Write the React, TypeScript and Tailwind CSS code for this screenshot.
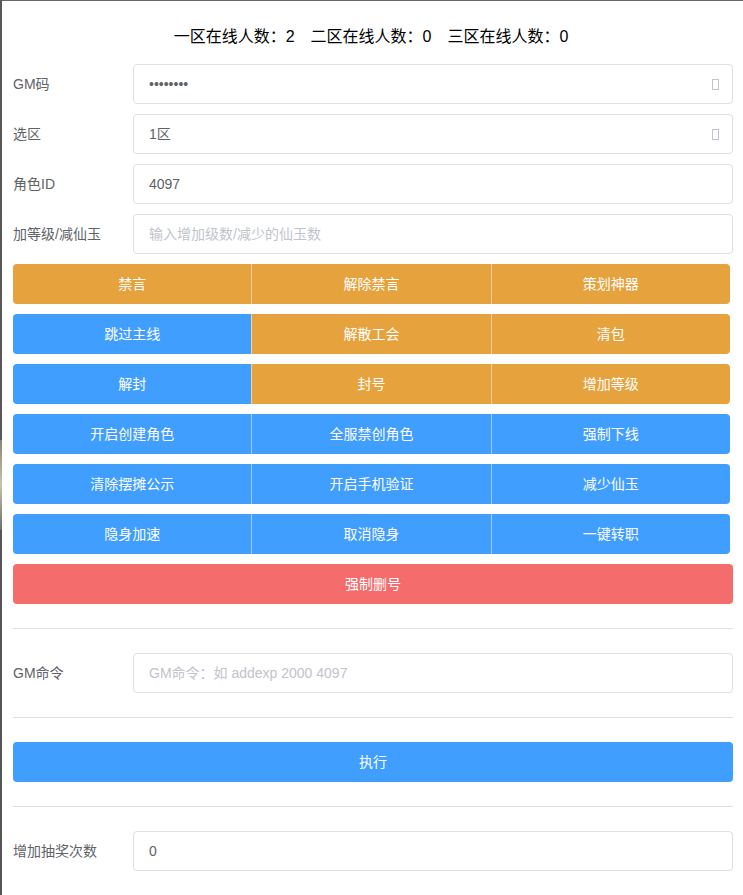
import React from 'react';

type Btn = { label: string; kind: 'primary' | 'warning' };

const rows: Btn[][] = [
  [
    { label: '禁言', kind: 'warning' },
    { label: '解除禁言', kind: 'warning' },
    { label: '策划神器', kind: 'warning' },
  ],
  [
    { label: '跳过主线', kind: 'primary' },
    { label: '解散工会', kind: 'warning' },
    { label: '清包', kind: 'warning' },
  ],
  [
    { label: '解封', kind: 'primary' },
    { label: '封号', kind: 'warning' },
    { label: '增加等级', kind: 'warning' },
  ],
  [
    { label: '开启创建角色', kind: 'primary' },
    { label: '全服禁创角色', kind: 'primary' },
    { label: '强制下线', kind: 'primary' },
  ],
  [
    { label: '清除摆摊公示', kind: 'primary' },
    { label: '开启手机验证', kind: 'primary' },
    { label: '减少仙玉', kind: 'primary' },
  ],
  [
    { label: '隐身加速', kind: 'primary' },
    { label: '取消隐身', kind: 'primary' },
    { label: '一键转职', kind: 'primary' },
  ],
];

function Field({
  label,
  value,
  placeholder,
  icon,
}: {
  label: string;
  value?: string;
  placeholder?: string;
  icon?: boolean;
}) {
  return (
    <div className="flex items-center h-[40px]">
      <div className="w-[120px] shrink-0 text-[14px] text-[#606266]">{label}</div>
      <div className="flex-1 h-full flex items-center border border-[#DCDFE6] rounded-[4px] bg-white px-[15px]">
        {value ? (
          <span className="flex-1 text-[14px] text-[#606266]">{value}</span>
        ) : (
          <span className="flex-1 text-[14px] text-[#C0C4CC]">{placeholder}</span>
        )}
        {icon && <span className="w-[7px] h-[11px] border border-[#C0C4CC] mr-[-2px]" />}
      </div>
    </div>
  );
}

function Divider() {
  return <div className="h-px bg-[#DCDFE6] my-[24px]" />;
}

export default function App() {
  return (
    <div
      className="flex w-[743px] h-[895px] overflow-hidden"
      style={{ fontFamily: '"Liberation Sans", "Noto Sans CJK SC", sans-serif' }}
    >
      {/* backdrop sliver */}
      <div className="w-[2px] shrink-0 flex flex-col">
        <div className="h-[440px] bg-[#585858]" />
        <div className="h-[90px] bg-gradient-to-b from-[#8a8570] via-[#c9c3ad] to-[#6f6d66]" />
        <div className="flex-1 bg-[#555555]" />
      </div>

      <div className="flex-1 bg-white border-t border-[#666666] pl-[11px] pr-[10px]">
        <div className="pt-[24px] pb-[15px] pr-[4px] text-center text-[16px] leading-[24px] text-[#000000]">
          一区在线人数：2　二区在线人数：0　三区在线人数：0
        </div>

        <div className="flex flex-col gap-[10px]">
          <Field label="GM码" value="••••••••" icon />
          <Field label="选区" value="1区" icon />
          <Field label="角色ID" value="4097" />
          <Field label="加等级/减仙玉" placeholder="输入增加级数/减少的仙玉数" />

          {rows.map((row, i) => (
            <div key={i} className="flex h-[40px] w-[717px]">
              {row.map((b, j) => (
                <button
                  key={b.label}
                  className={`flex-1 h-full text-[14px] text-white flex items-center justify-center ${
                    b.kind === 'primary' ? 'bg-[#409EFF]' : 'bg-[#E6A23C]'
                  } ${j === 0 ? 'rounded-l-[4px]' : 'border-l border-white/50'} ${
                    j === 2 ? 'rounded-r-[4px]' : ''
                  }`}
                >
                  {b.label}
                </button>
              ))}
            </div>
          ))}

          <button className="h-[40px] w-full rounded-[4px] bg-[#F56C6C] text-white text-[14px]">
            强制删号
          </button>
        </div>

        <Divider />
        <Field label="GM命令" placeholder="GM命令：如 addexp 2000 4097" />
        <Divider />
        <button className="h-[40px] w-full rounded-[4px] bg-[#409EFF] text-white text-[14px]">
          执行
        </button>
        <Divider />
        <Field label="增加抽奖次数" value="0" />
      </div>
    </div>
  );
}
